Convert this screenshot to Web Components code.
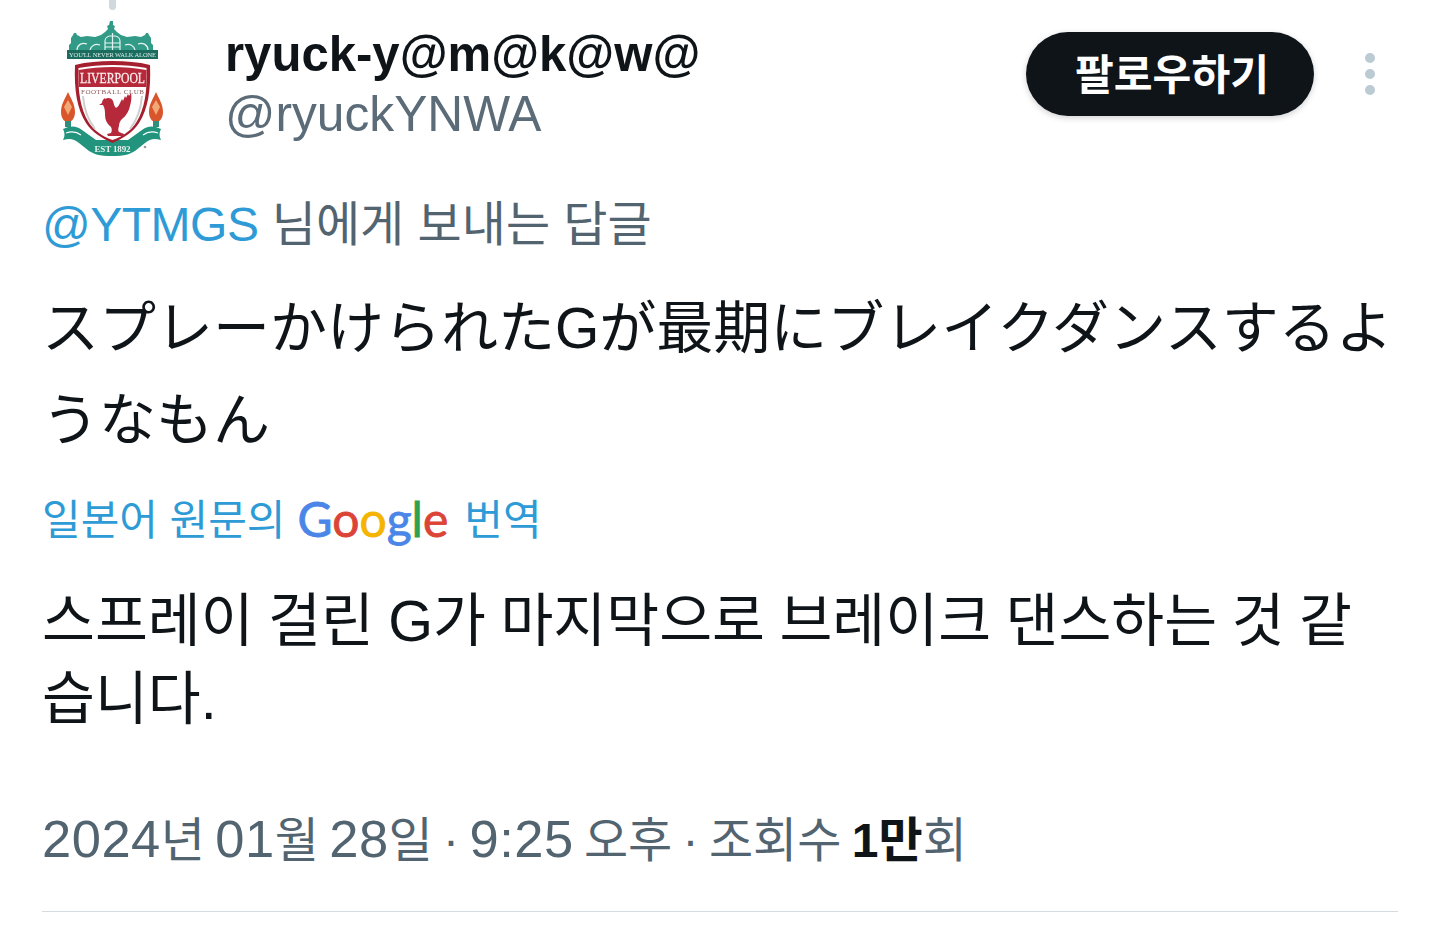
<!doctype html>
<html lang="ko">
<head>
<meta charset="utf-8">
<title>tweet</title>
<style>
  html, body { margin: 0; background: #fff; }
  body { font-family: "Liberation Sans", "Noto Sans CJK KR", "Noto Sans CJK JP", sans-serif; color: #0f1419; }
</style>
</head>
<body>
<tweet-card>
  <tweet-header slot="header" name="ryuck-y@m@k@w@" handle="@ryuckYNWA"></tweet-header>
  <reply-to slot="reply" who="@YTMGS" rest="님에게 보내는 답글"></reply-to>
  <span slot="text" lang="ja">スプレーかけられたGが最期にブレイクダンスするようなもん</span>
  <translate-label slot="label"></translate-label>
  <span slot="translated">스프레이 걸린 G가 마지막으로 브레이크 댄스하는 것 같<br>습니다.</span>
  <tweet-meta slot="meta"></tweet-meta>
</tweet-card>

<script>
const FONT_JA = '"Liberation Sans", "Noto Sans CJK JP", sans-serif'

customElements.define('tweet-card', class extends HTMLElement {
  constructor () {
    super()
    this.attachShadow({ mode: 'open' })
    this.shadowRoot.innerHTML = `
<style>
  :host{
    display: block;
    position: relative;
    width: 1440px;
    height: 952px;
    box-sizing: border-box;
    padding: 0 42px;
    overflow: hidden;
  }
  .thread{
    position: absolute;
    left: 109px;
    top: -4px;
    width: 7px;
    height: 14px;
    border-radius: 4px;
    background: #cfd9de;
  }
  .reply{ margin-top: 35px; }
  .text{
    margin: 25px 0 0;
    font: 400 57px/92px ${FONT_JA};
  }
  .label{ margin-top: 24px; }
  .translated{
    margin-top: 30px;
    font-size: 57.500px;
    line-height: 78px;
    word-spacing: -1.500px;
  }
  .meta{ margin-top: 69px; }
  hr{
    margin: 38px 0 0;
    border: 0;
    border-top: 1px solid #d5dbdf;
  }
</style>
<div class="thread"></div>
<slot name="header"></slot>
<div class="reply"><slot name="reply"></slot></div>
<div class="text"><slot name="text"></slot></div>
<div class="label"><slot name="label"></slot></div>
<div class="translated"><slot name="translated"></slot></div>
<div class="meta"><slot name="meta"></slot></div>
<hr>
`
  }
})

customElements.define('lfc-crest', class extends HTMLElement {
  constructor () {
    super()
    this.attachShadow({ mode: 'open' })
    this.shadowRoot.innerHTML = `
<style>
  :host{ display: block; width: 110px; height: 140px; }
  svg{ display: block; filter: blur(.6px); }
  text{ font-family: "Liberation Serif", serif; }
</style>
<svg width="110" height="140" viewBox="0 0 110 140">
  <!-- gate on top -->
  <path fill="#329b87" d="M52 1h3v4l2 1-1 3 3 3 4 3 6 2 8-1 6 1 4-2 1-2h2l1 2 2 3v5l2 2v7H11v-7l2-2v-5l2-3 1-2h2l1 2 4 2 6-1 8 1 6-2 4-3 3-3-1-3 2-1z"/>
  <path fill="none" stroke="#e4f3ef" stroke-width="1.200" d="M19 30c0-5 5-8 10-6M32 30c1-4 5-7 10-5M90 30c0-5-5-8-10-6M77 30c-1-4-5-7-10-5M47 31v-10c0-7 15-7 15 0v10M54.500 13v18M47 23h15M47 27h15"/>
  <path fill="#1c6b5f" d="M9 30h91v9H9z"/>
  <text x="54.500" y="37" text-anchor="middle" font-size="6.500" fill="#d6ede6" textLength="87">YOU'LL NEVER WALK ALONE</text>
  <!-- side flames -->
  <path fill="#d9552b" d="M10 72c3 7 7 12 7 20 0 6-3 10-7 10s-7-4-7-10c0-8 4-13 7-20z"/>
  <path fill="#f2a877" d="M10 80l4 7-4 8-4-8z"/>
  <path fill="#d9552b" d="M98 72c3 7 7 12 7 20 0 6-3 10-7 10s-7-4-7-10c0-8 4-13 7-20z"/>
  <path fill="#f2a877" d="M98 80l4 7-4 8-4-8z"/>
  <path fill="#2f8f7b" d="M7 101h6v6H7zM95 101h6v6h-6z"/>
  <!-- ribbons -->
  <path fill="#22937c" d="M5 109c8-4 14-3 19 1l14 10h32l14-10c5-4 11-5 19-1-2 4-2 7 0 11-7-2-11-1-16 3l-10 8c-5 3-10 5-23 5s-18-2-23-5l-10-8c-5-4-9-5-16-3 2-4 2-7 0-11z"/>
  <path fill="none" stroke="#fff" stroke-width="1.200" d="M8 113c6-2 11-1 15 2M100 113c-6-2-11-1-15 2"/>
  <text x="54.500" y="132" text-anchor="middle" font-size="9" font-weight="700" fill="#e6f3ef" textLength="36">EST 1892</text>
  <circle cx="87" cy="127" r="1.300" fill="#999"/>
  <!-- shield -->
  <path fill="#a51f2f" d="M17 45c12-3 24-4 37.500-4s25.500 1 37.500 4c1 25-2 44-11 58-6 9-15 15-26.500 20-11.500-5-20.500-11-26.500-20-9-14-12-33-11-58z"/>
  <path fill="#fff" d="M20.500 48c11-2 22-3 34-3s23 1 34 3c1 23-2 41-10 54-5 8-13 14-24 18-11-4-19-10-24-18-8-13-11-31-10-54z"/>
  <path fill="#b5293a" d="M20.500 50c11-2 22-3 34-3s23 1 34 3v17h-68z"/>
  <text x="54.500" y="63" text-anchor="middle" font-size="15" stroke="#fbeeee" stroke-width=".3" fill="#fbeeee" textLength="65" lengthAdjust="spacingAndGlyphs">LIVERPOOL</text>
  <text x="54.500" y="73.500" text-anchor="middle" font-size="7" fill="#8a5a5a" textLength="63">FOOTBALL CLUB</text>
  <path fill="none" stroke="#cfcfcf" stroke-width="2" d="M25 76c1 13 5 24 12 33M84 76c-1 13-5 24-12 33"/>
  <!-- liver bird -->
  <path fill="#b5293a" d="M47 79c3-2 7-1 8 2 1 3 1 5 3 7 2-1 3-3 4-5l2-4 1 2 2-5 1 2 2-4 1 2 2-3c1 5 0 9-1 13-1 5-4 10-8 13-2 2-3 4-3 7-1 3-1 5 0 6l5 2v2H50l-1-2 4-1c1-2 1-4 0-6-4-3-6-7-6-12 0-3 0-7-2-10l-4 0 3-2c0-2 1-4 3-5z"/>
</svg>
`
  }
})

customElements.define('tweet-header', class extends HTMLElement {
  constructor () {
    super()
    this.attachShadow({ mode: 'open' })
    this.shadowRoot.innerHTML = `
<style>
  :host{
    display: flex;
    align-items: flex-start;
    height: 158px;
  }
  .crest{ margin: 20px 0 0 16px; }
  .who{ margin: 24px 0 0 57px; flex: 1; }
  .name{ font-weight: 700; font-size: 49.100px; line-height: 60px; color: #0f1419; }
  .handle{ font-size: 49.700px; line-height: 60px; color: #5b6b77; }
  button{
    margin-top: 32px;
    width: 288px;
    height: 84px;
    border: 0;
    border-radius: 42px;
    padding: 0 0 6px 4px;
    background: #0f1419;
    color: #fff;
    font: 700 42.200px "Noto Sans CJK KR", sans-serif;
    box-shadow: 0 2px 6px rgba(0,0,0,.18);
  }
  .more{ margin: 53px 22px 0 50px; display: block; }
</style>
<lfc-crest class="crest"></lfc-crest>
<div class="who">
  <div class="name">${this.getAttribute('name')}</div>
  <div class="handle">${this.getAttribute('handle')}</div>
</div>
<button>팔로우하기</button>
<svg class="more" width="12" height="42" viewBox="0 0 12 42" fill="#bccad3">
  <circle cx="6" cy="5" r="5"/><circle cx="6" cy="21" r="5"/><circle cx="6" cy="37" r="5"/>
</svg>
`
  }
})

customElements.define('reply-to', class extends HTMLElement {
  constructor () {
    super()
    this.attachShadow({ mode: 'open' })
    this.shadowRoot.innerHTML = `
<style>
  :host{ display: block; font-size: 48px; line-height: 64px; color: #536471; }
  span{ color: #2f9bd6; letter-spacing: -.5px; }
</style>
<span>${this.getAttribute('who')}</span> ${this.getAttribute('rest')}
`
  }
})

customElements.define('translate-label', class extends HTMLElement {
  constructor () {
    super()
    this.attachShadow({ mode: 'open' })
    this.shadowRoot.innerHTML = `
<style>
  :host{
    display: flex;
    align-items: center;
    gap: 12px;
    font-size: 42px;
    line-height: 62px;
    color: #2f9bd6;
  }
  .g{
    font: 400 48px/62px Lato, sans-serif;
    margin: -5px 4px 0 0;
  }
  .g b{ font-weight: 400; -webkit-text-stroke: .8px; }
  .b{ color: #4a86e8; }
  .r{ color: #db4437; }
  .y{ color: #f4b400; }
  .gr{ color: #2fa14f; }
</style>
<span>일본어 원문의</span>
<span class="g"><b class="b">G</b><b class="r">o</b><b class="y">o</b><b class="b">g</b><b class="gr">l</b><b class="r">e</b></span>
<span>번역</span>
`
  }
})

customElements.define('tweet-meta', class extends HTMLElement {
  constructor () {
    super()
    this.attachShadow({ mode: 'open' })
    this.shadowRoot.innerHTML = `
<style>
  :host{ display: block; font-size: 48px; line-height: 64px; color: #536471; word-spacing: -3px; }
  i{ font-style: normal; font-size: 52.500px; letter-spacing: .5px; }
  b{ color: #0f1419; font-weight: 700; }
</style>
<i>2024</i>년 <i>01</i>월 <i>28</i>일 · <i>9:25</i> 오후 · 조회수 <b>1만</b>회
`
  }
})
</script>
</body>
</html>
